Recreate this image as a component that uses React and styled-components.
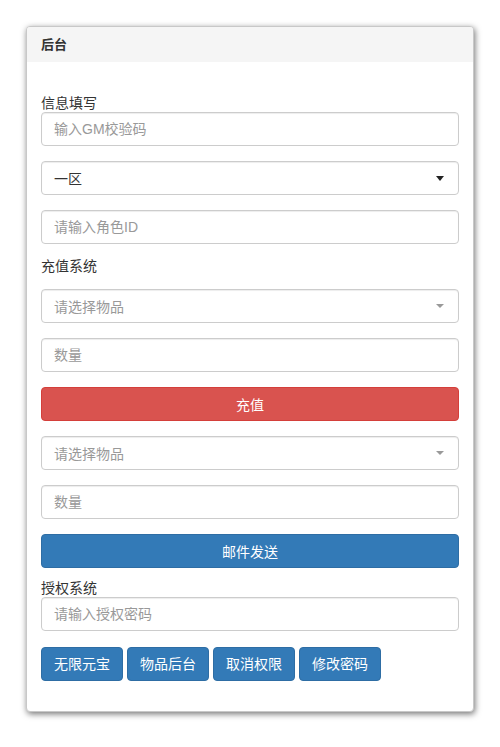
import React from 'react';
import styled, { createGlobalStyle } from 'styled-components';

const GlobalStyle = createGlobalStyle`
  html, body {
    margin: 0;
    padding: 0;
    background: #fff;
  }
  body {
    font-family: "Liberation Sans", "Noto Sans CJK SC", sans-serif;
    font-size: 14px;
    color: #333;
  }
`;

const Page = styled.div`
  padding: 26px 26px 30px 26px;
`;

const Panel = styled.div`
  border: 1px solid #c8c8c8;
  border-radius: 4px;
  background: #fff;
  box-shadow: 1px 2px 6px rgba(0, 0, 0, 0.55);
  overflow: hidden;
`;

const PanelHeading = styled.div`
  background: #f5f5f5;
  padding: 8px 14px 7px 14px;
  line-height: 20px;
  font-size: 13px;
  font-weight: bold;
  color: #333;
`;

const PanelBody = styled.div`
  display: flex;
  flex-direction: column;
  padding: 32px 14px 30px 14px;
`;

const Label = styled.div`
  line-height: 18px;
  height: 18px;
  font-size: 14px;
  color: #333;
  margin-top: ${(p) => p.$top || 0}px;
  margin-bottom: ${(p) => p.$bottom || 0}px;
`;

const Input = styled.input`
  box-sizing: border-box;
  height: 34px;
  width: 100%;
  padding: 6px 12px;
  border: 1px solid #ccc;
  border-radius: 4px;
  box-shadow: inset 0 1px 1px rgba(0, 0, 0, 0.075);
  font-family: inherit;
  font-size: 14px;
  color: #555;
  margin-bottom: ${(p) => p.$bottom ?? 15}px;

  &::placeholder {
    color: #999;
  }
`;

const Select = styled.div`
  box-sizing: border-box;
  height: 34px;
  display: flex;
  align-items: center;
  justify-content: space-between;
  padding: 0 14px 0 12px;
  border: 1px solid #ccc;
  border-radius: 4px;
  box-shadow: inset 0 1px 1px rgba(0, 0, 0, 0.075);
  color: ${(p) => (p.$placeholder ? '#999' : '#333')};
  margin-bottom: 15px;
`;

const Caret = styled.span`
  width: 0;
  height: 0;
  border-left: 4px solid transparent;
  border-right: 4px solid transparent;
  border-top: ${(p) => (p.$light ? '4px solid #999' : '5px solid #222')};
`;

const BlockButton = styled.button`
  box-sizing: border-box;
  height: 34px;
  width: 100%;
  border-radius: 4px;
  border: 1px solid ${(p) => (p.$variant === 'danger' ? '#d43f3a' : '#2e6da4')};
  background: ${(p) => (p.$variant === 'danger' ? '#d9534f' : '#337ab7')};
  color: #fff;
  font-family: inherit;
  font-size: 14px;
  margin-bottom: 15px;
`;

const ButtonRow = styled.div`
  display: flex;
  gap: 4px;
  margin-top: 16px;
`;

const Button = styled.button`
  box-sizing: border-box;
  height: 34px;
  padding: 6px 12px;
  border-radius: 4px;
  border: 1px solid #2e6da4;
  background: #337ab7;
  color: #fff;
  font-family: inherit;
  font-size: 14px;
  line-height: 20px;
  white-space: nowrap;
`;

function App() {
  return (
    <Page>
      <GlobalStyle />
      <Panel>
        <PanelHeading>后台</PanelHeading>
        <PanelBody>
          <Label>信息填写</Label>
          <Input placeholder="输入GM校验码" />
          <Select>
            <span>一区</span>
            <Caret />
          </Select>
          <Input placeholder="请输入角色ID" $bottom={13} />

          <Label $bottom={14}>充值系统</Label>
          <Select $placeholder>
            <span>请选择物品</span>
            <Caret $light />
          </Select>
          <Input placeholder="数量" />
          <BlockButton $variant="danger">充值</BlockButton>
          <Select $placeholder>
            <span>请选择物品</span>
            <Caret $light />
          </Select>
          <Input placeholder="数量" />
          <BlockButton>邮件发送</BlockButton>

          <Label $top={-4}>授权系统</Label>
          <Input placeholder="请输入授权密码" $bottom={0} />
          <ButtonRow>
            <Button>无限元宝</Button>
            <Button>物品后台</Button>
            <Button>取消权限</Button>
            <Button>修改密码</Button>
          </ButtonRow>
        </PanelBody>
      </Panel>
    </Page>
  );
}

export default App;
